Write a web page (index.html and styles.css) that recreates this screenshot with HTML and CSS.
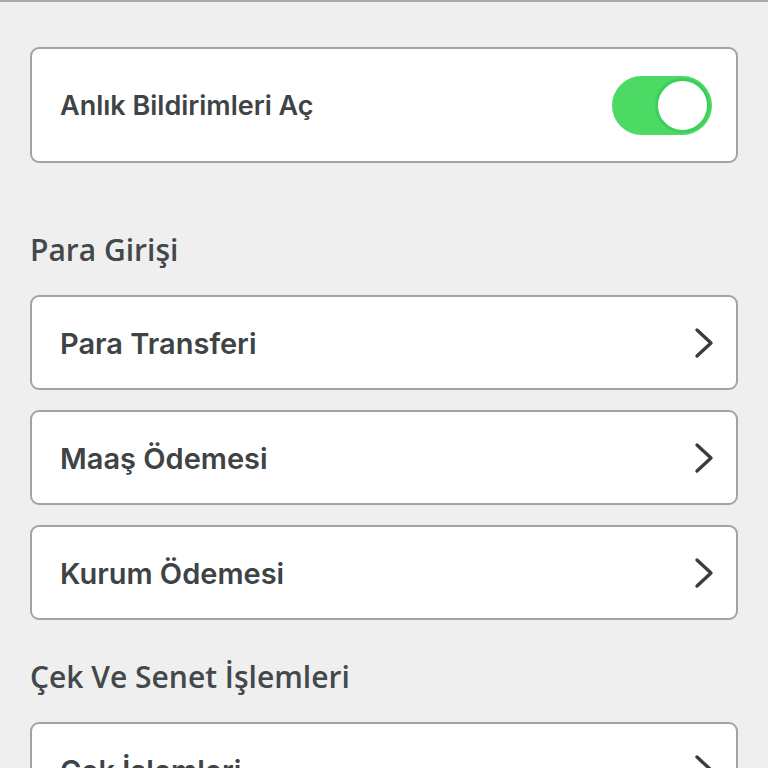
FILE: index.html
```html
<!DOCTYPE html>
<html lang="tr">
<head>
    <meta charset="UTF-8">
    <meta name="viewport" content="width=device-width, initial-scale=1.0">
    <title>Bildirim Ayarları</title>
    <link rel="stylesheet" href="styles.css">
</head>
<body>
    <div class="page">
        <div class="card card-switch">
            <span class="label">Anlık Bildirimleri Aç</span>
            <div class="switch on"><span class="knob"></span></div>
        </div>

        <h2 class="section">Para Girişi</h2>
        <ul class="list">
            <li class="card">
                <span class="label">Para Transferi</span>
                <svg class="arrow" viewBox="0 0 20 32"><path d="M3 3 L17 16 L3 29"/></svg>
            </li>
            <li class="card">
                <span class="label">Maaş Ödemesi</span>
                <svg class="arrow" viewBox="0 0 20 32"><path d="M3 3 L17 16 L3 29"/></svg>
            </li>
            <li class="card">
                <span class="label">Kurum Ödemesi</span>
                <svg class="arrow" viewBox="0 0 20 32"><path d="M3 3 L17 16 L3 29"/></svg>
            </li>
        </ul>

        <h2 class="section">Çek Ve Senet İşlemleri</h2>
        <ul class="list">
            <li class="card">
                <span class="label">Çek İşlemleri</span>
                <svg class="arrow" viewBox="0 0 20 32"><path d="M3 3 L17 16 L3 29"/></svg>
            </li>
        </ul>
    </div>
</body>
</html>
```

FILE: styles.css
```css
* {
    margin: 0;
    padding: 0;
    box-sizing: border-box;
}

html, body {
    height: 100%;
    overflow: hidden;
}

body {
    background: #efefef;
    font-family: Inter, "Noto Sans", sans-serif;
    color: #3e4346;
    border-top: 2px solid #a9a9a9;
}

li {
    list-style: none;
}

.page {
    padding: 45px 30px 0 30px;
}

.card {
    display: flex;
    align-items: center;
    justify-content: space-between;
    background: #fff;
    border: 2px solid #a3a3a3;
    border-radius: 9px;
    height: 95px;
    padding: 0 22px 0 28px;
}

.card-switch {
    height: 116px;
    padding-right: 24px;
}

.label {
    font-size: 29px;
    font-weight: 600;
    padding-top: 1px;
}

.card-switch .label {
    font-size: 27px;
    padding-top: 0;
}

.switch {
    width: 100px;
    height: 59px;
    border-radius: 30px;
    background: #4cd964;
    display: flex;
    align-items: center;
    justify-content: flex-end;
    padding-right: 2px;
}

.knob {
    width: 55px;
    height: 55px;
    border-radius: 50%;
    background: #fff;
    border: 3px solid #3ecf5a;
}

.section {
    font-family: "Open Sans", "Noto Sans", sans-serif;
    font-weight: 600;
    font-size: 30px;
    color: #43484b;
    margin: 65px 0 23px 0;
    line-height: 44px;
}

.list {
    display: flex;
    flex-direction: column;
    gap: 20px;
}

.list + .section {
    margin-top: 35px;
}

.arrow {
    width: 20px;
    height: 32px;
    fill: none;
    stroke: #3a3d40;
    stroke-width: 3.4;
    stroke-linecap: round;
    stroke-linejoin: round;
}
```
